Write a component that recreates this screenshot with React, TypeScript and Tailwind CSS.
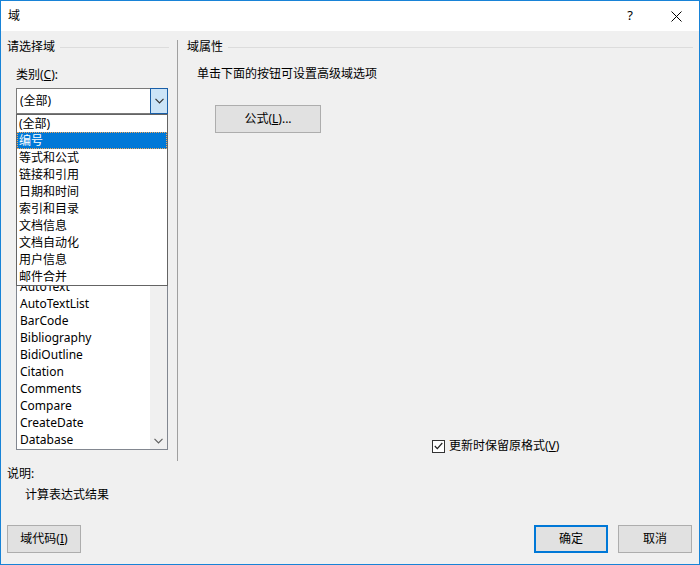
const font = { fontFamily: '"Segoe UI", "Noto Sans", "Noto Sans CJK SC", sans-serif' }

// rows above AutoText sit behind the open dropdown, so only their space is kept
const hiddenRowCount = 8

const fieldRows = [
  "AutoText",
  "AutoTextList",
  "BarCode",
  "Bibliography",
  "BidiOutline",
  "Citation",
  "Comments",
  "Compare",
  "CreateDate",
  "Database",
]

const categories = [
  "(全部)",
  "编号",
  "等式和公式",
  "链接和引用",
  "日期和时间",
  "索引和目录",
  "文档信息",
  "文档自动化",
  "用户信息",
  "邮件合并",
]

function Chevron({ className }: { className?: string }) {
  return (
    <svg width="9" height="6" viewBox="0 0 9 6" className={className}>
      <path d="M0.5 0.8 L4.5 4.8 L8.5 0.8" fill="none" stroke="currentColor" strokeWidth="1.2" />
    </svg>
  )
}

function GroupHeader({ label }: { label: string }) {
  return (
    <div className="flex h-[16px] items-center">
      <span className="leading-none">{label}</span>
      <div className="ml-[5px] h-px flex-1 bg-[#dcdcdc]" />
    </div>
  )
}

function Button({ children, className = "" }: { children: React.ReactNode; className?: string }) {
  return (
    <div
      className={
        "flex h-[28px] items-center justify-center border border-[#adadad] bg-[#e1e1e1] " + className
      }
    >
      {children}
    </div>
  )
}

export default function App() {
  return (
    <div
      className="flex h-[565px] w-[700px] flex-col border border-[#1883d7] text-[12px] text-black"
      style={font}
    >
      {/* title bar */}
      <div className="flex h-[30px] items-center bg-white">
        <span className="ml-[7px]">域</span>
        <div className="flex-1" />
        <span className="mr-[38px] text-[13px]">?</span>
        <svg width="11" height="11" viewBox="0 0 11 11" className="mr-[17px]">
          <path d="M0.5 0.5 L10.5 10.5 M10.5 0.5 L0.5 10.5" stroke="#000" strokeWidth="1" />
        </svg>
      </div>

      <div className="flex flex-1 flex-col bg-[#f0f0f0]">
        <div className="flex h-[431px]">
          {/* left column */}
          <div className="w-[176px] pl-[6px] pr-[8px] pt-[8px]">
            <GroupHeader label="请选择域" />
            <div className="ml-[9px] mt-[12px] flex h-[16px] items-center">
              类别(<span className="underline">C</span>):
            </div>
            <div className="relative ml-[9px] mt-[5px] w-[152px]">
              <div className="relative flex h-[26px] items-center border border-[#7a7a7a] bg-white pl-[3px]">
                (全部)
                <div className="absolute -right-px -top-px flex h-[26px] w-[18px] items-center justify-center border border-[#1a5fa8] bg-[#cce4f7] text-[#333]">
                  <Chevron />
                </div>
              </div>
              {/* open dropdown */}
              <div className="absolute left-0 top-[26px] z-10 w-[152px] border border-[#646464] bg-white">
                {categories.map((c, i) => (
                  <div
                    key={c}
                    className={
                      "flex h-[17px] items-center pl-[2px] " +
                      (i === 1 ? "bg-[#0078d7] text-white outline-1 -outline-offset-1 outline-dotted outline-[#f5a95a]" : "")
                    }
                  >
                    {c}
                  </div>
                ))}
              </div>
            </div>
            {/* field-name label, covered by the dropdown */}
            <div className="mt-[10px] h-[16px]" />
            <div className="relative ml-[9px] mt-[1px] flex h-[309px] w-[152px] border border-[#828790] bg-white">
              <div className="flex-1 overflow-hidden">
                <div style={{ height: hiddenRowCount * 17 }} />
                {fieldRows.map((r) => (
                  <div key={r} className="flex h-[17px] items-center pl-[3px]">
                    {r}
                  </div>
                ))}
              </div>
              <div className="flex w-[17px] flex-col justify-end bg-[#f0f0f0]">
                <div className="flex h-[17px] items-center justify-center text-[#606060]">
                  <Chevron />
                </div>
              </div>
            </div>
          </div>

          <div className="mb-px mt-[9px] w-px bg-[#a0a0a0]" />

          {/* right column */}
          <div className="flex flex-1 flex-col pl-[9px] pr-[6px] pt-[8px]">
            <GroupHeader label="域属性" />
            <div className="ml-[10px] mt-[11px] flex h-[16px] items-center">
              单击下面的按钮可设置高级域选项
            </div>
            <Button className="ml-[28px] mt-[23px] w-[106px]">
              公式(<span className="underline">L</span>)...
            </Button>
            <div className="flex-1" />
            <div className="mb-[8px] ml-[245px] flex h-[16px] items-center">
              <div className="flex h-[13px] w-[13px] items-center justify-center border border-[#333] bg-white">
                <svg width="9" height="8" viewBox="0 0 9 8">
                  <path d="M0.8 4 L3.3 6.6 L8.3 1" fill="none" stroke="#222" strokeWidth="1.2" />
                </svg>
              </div>
              <span className="ml-[4px]">
                更新时保留原格式(<span className="underline">V</span>)
              </span>
            </div>
          </div>
        </div>

        {/* description + buttons */}
        <div className="pl-[6px] pr-[6px]">
          <div className="mt-[4px] flex h-[16px] items-center">说明:</div>
          <div className="ml-[18px] mt-[5px] flex h-[16px] items-center">计算表达式结果</div>
          <div className="mt-[22px] flex">
            <Button className="w-[74px]">
              域代码(<span className="underline">I</span>)
            </Button>
            <div className="flex-1" />
            <div className="flex h-[28px] w-[74px] items-center justify-center border-2 border-[#0078d7] bg-[#e1e1e1]">
              确定
            </div>
            <Button className="ml-[10px] w-[74px]">取消</Button>
            <div className="w-px" />
          </div>
        </div>
      </div>
    </div>
  )
}
